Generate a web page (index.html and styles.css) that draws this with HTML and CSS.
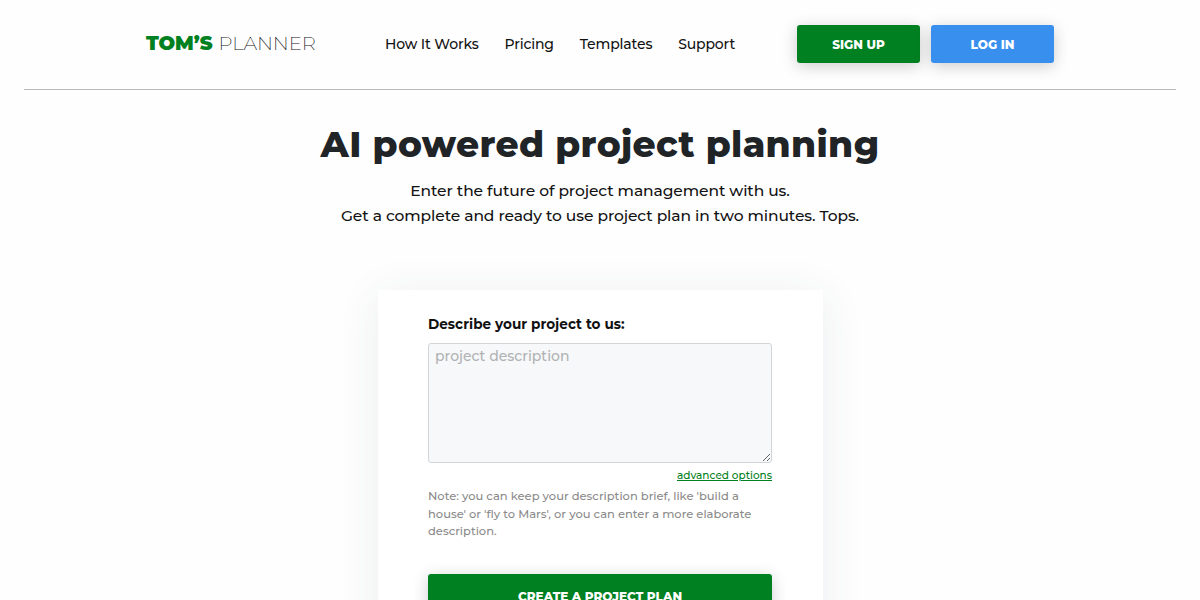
FILE: index.html
```html
<!DOCTYPE html>
<html lang="en">
<head>
    <meta charset="utf-8"/>
    <meta name="viewport" content="width=device-width, initial-scale=1"/>
    <title>Tom's Planner</title>
    <link rel="stylesheet" href="styles.css">
</head>
<body>
    <header class="header">
        <a class="logo" href="#"><b>TOM’S</b> PLANNER</a>
        <nav class="menu">
            <a href="#">How It Works</a>
            <a href="#">Pricing</a>
            <a href="#">Templates</a>
            <a href="#">Support</a>
        </nav>
        <div class="buttons">
            <a class="btn green" href="#">SIGN UP</a>
            <a class="btn blue" href="#">LOG IN</a>
        </div>
    </header>
    <main>
        <h1>AI powered project planning</h1>
        <p class="intro">Enter the future of project management with us.<br>Get a complete and ready to use project plan in two minutes. Tops.</p>
        <form class="card">
            <label for="description">Describe your project to us:</label>
            <textarea id="description" placeholder="project description"></textarea>
            <a class="advanced" href="#">advanced options</a>
            <p class="note">Note: you can keep your description brief, like 'build a house' or 'fly to Mars', or you can enter a more elaborate description.</p>
            <button class="btn green create" type="button">CREATE A PROJECT PLAN</button>
        </form>
    </main>
</body>
</html>
```
FILE: styles.css
```css
html, body {
    margin: 0;
    padding: 0;
}
body {
    height: 600px;
    overflow: hidden;
    background: #fefefe;
    color: #111;
    font-family: Montserrat, Inter, sans-serif;
}
a {
    color: inherit;
    text-decoration: none;
}
.header {
    display: flex;
    box-sizing: border-box;
    height: 90px;
    margin: 0 24px;
    padding: 25px 122px 0;
    border-bottom: 1px solid #b9b9b9;
}
.logo {
    width: 239px;
    padding-top: 6px;
    font-size: 19.6px;
    line-height: 24px;
    font-weight: 200;
    letter-spacing: -0.1px;
    white-space: nowrap;
}
.logo b {
    margin-right: 1.2px;
    color: #008021;
    font-weight: 900;
}
.menu {
    display: flex;
    gap: 25.9px;
    width: 412px;
    padding-top: 9px;
    font-size: 14px;
    line-height: 20px;
    font-weight: 500;
    letter-spacing: -0.14px;
    white-space: nowrap;
}
.buttons {
    display: flex;
    gap: 11px;
}
.btn {
    display: block;
    width: 123px;
    height: 38px;
    border: 0;
    border-radius: 3px;
    color: #fff;
    font-family: inherit;
    font-size: 12px;
    line-height: 40px;
    font-weight: 800;
    text-align: center;
    box-shadow: 0 3px 16px rgba(0, 0, 0, 0.2);
}
.green {
    background: #008021;
}
.blue {
    background: #398fee;
}
h1 {
    margin: 32px 0 0;
    color: #212427;
    font-size: 36px;
    line-height: 44px;
    font-weight: 800;
    text-align: center;
    letter-spacing: 0.35px;
}
.intro {
    margin: 12px 0 0;
    font-size: 15.5px;
    line-height: 25px;
    font-weight: 500;
    text-align: center;
    letter-spacing: -0.09px;
}
.card {
    display: flex;
    flex-direction: column;
    box-sizing: border-box;
    width: 445px;
    height: 400px;
    margin: 62px auto 0;
    padding: 24px 50.5px 0;
    background: #fff;
    box-shadow: 0 6px 40px rgba(40, 70, 80, 0.09);
}
.card label {
    font-size: 13.6px;
    line-height: 20px;
    font-weight: 700;
    letter-spacing: 0.03px;
}
.card textarea {
    box-sizing: border-box;
    flex-shrink: 0;
    height: 120px;
    margin: 9px 0 0;
    padding: 3px 6px;
    border: 1px solid #d2d5d7;
    border-radius: 3px;
    background: #f6f8fa;
    font: 500 14px/18px Montserrat, Inter, sans-serif;
}
.card textarea::placeholder {
    color: #b0b2b3;
}
.advanced {
    align-self: flex-end;
    margin-top: 5px;
    color: #008021;
    font-size: 10.5px;
    line-height: 16px;
    font-weight: 500;
    text-decoration: underline;
}
.note {
    margin: 4px 0 0;
    color: #8b8b8b;
    font-size: 11.5px;
    line-height: 17.6px;
    font-weight: 500;
}
.create {
    flex-shrink: 0;
    width: 100%;
    height: 44px;
    margin-top: 33px;
    line-height: 43px;
}
```
